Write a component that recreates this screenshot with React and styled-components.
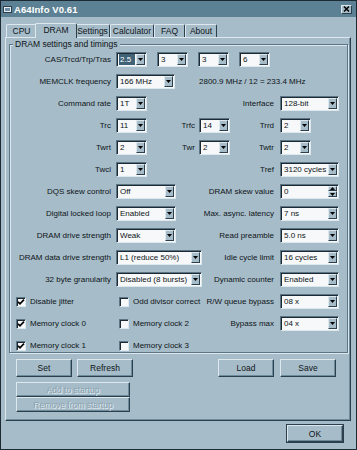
import React from 'react';
import styled, { createGlobalStyle } from 'styled-components';

const C = {
  face: '#a6bcc8',
  title: '#5d8194',
  light: '#dde8ee',
  dark: '#2c3f4c',
  mid: '#6f8c9c',
  edge: '#5b7585',
  deep: '#1d2a33',
  text: '#0e1418',
  field: '#f6f8f9',
  sel: '#3f6277',
};

const Global = createGlobalStyle`
  html, body { margin: 0; padding: 0; background: ${C.face}; }
  body {
    font-family: "Liberation Sans", Arial, sans-serif;
    font-size: 8px;
    color: ${C.text};
  }
  #root { width: 357px; height: 450px; }
`;

const Window = styled.div`
  width: 357px;
  height: 450px;
  box-sizing: border-box;
  background: ${C.face};
  border: 1px solid #1c2a33;
  display: flex;
  flex-direction: column;
`;

const TitleBar = styled.div`
  height: 16px;
  flex: none;
  background: ${C.title};
  display: flex;
  align-items: center;
  gap: 2px;
  padding: 0 4px 0 2px;
  color: #fff;
  font-weight: bold;
  font-size: 9.5px;
`;

const TitleText = styled.span`
  flex: 1;
  letter-spacing: 0.1px;
`;

const CloseBtn = styled.div`
  width: 11px;
  height: 9px;
  box-sizing: border-box;
  background: ${C.face};
  border-top: 1px solid ${C.light};
  border-left: 1px solid ${C.light};
  border-right: 1px solid ${C.dark};
  border-bottom: 1px solid ${C.dark};
  display: flex;
  align-items: center;
  justify-content: center;
`;

const Main = styled.div`
  padding: 0 5px 0 4px;
  display: flex;
  flex-direction: column;
`;

const TabStrip = styled.div`
  display: flex;
  align-items: flex-end;
  height: 15px;
  margin-top: 6px;
  margin-bottom: -1px;
  padding-left: 1px;
  position: relative;
  z-index: 1;
`;

const Tab = styled.div`
  width: ${(p) => p.$w}px;
  height: ${(p) => (p.$active ? 15 : 13)}px;
  margin: 0 ${(p) => (p.$active ? '-2px' : '0')} ${(p) => (p.$active ? 0 : 1)}px;
  box-sizing: border-box;
  background: ${C.face};
  border-top: 1px solid ${C.light};
  border-left: 1px solid ${C.light};
  border-right: 1px solid ${C.dark};
  border-radius: 2px 2px 0 0;
  display: flex;
  align-items: center;
  justify-content: center;
  padding-bottom: ${(p) => (p.$active ? 2 : 0)}px;
  position: relative;
  z-index: ${(p) => (p.$active ? 2 : 1)};
  white-space: nowrap;
  font-size: 8.5px;
`;

const Panel = styled.div`
  height: 384px;
  box-sizing: border-box;
  border-top: 1px solid ${C.light};
  border-left: 1px solid ${C.light};
  border-right: 1px solid ${C.dark};
  border-bottom: 1px solid ${C.dark};
  box-shadow: inset -1px -1px 0 ${C.mid};
  padding: 1px 2px 0 3px;
  display: flex;
  flex-direction: column;
`;

const Group = styled.fieldset`
  margin: 0;
  padding: 2px 0 0 0;
  min-width: 0;
  height: 314px;
  box-sizing: border-box;
  border: 1px solid ${C.edge};
  box-shadow: inset 1px 1px 0 ${C.light}, 1px 1px 0 ${C.light};
`;

const Legend = styled.legend`
  margin-left: 3px;
  padding: 0 2px;
  line-height: 11px;
  font-size: 8.5px;
  background: ${C.face};
`;

const Grid = styled.div`
  display: grid;
  grid-template-columns: 106px 31px 52px 31px 50px 59px;
  grid-auto-rows: 15px;
  row-gap: 7px;
  align-items: center;
`;

const Label = styled.span`
  grid-column: ${(p) => p.$col};
  text-align: right;
  padding-right: ${(p) => p.$pr}px;
  white-space: nowrap;
  line-height: 15px;
`;

const Info = styled.span`
  grid-column: ${(p) => p.$col};
  white-space: nowrap;
  line-height: 15px;
`;

const ComboRow = styled.div`
  grid-column: ${(p) => p.$col};
  display: flex;
  gap: 10px;
`;

const ComboBox = styled.div`
  grid-column: ${(p) => p.$col};
  width: ${(p) => p.$w}px;
  height: 15px;
  box-sizing: border-box;
  display: flex;
  background: ${C.field};
  border-top: 1px solid ${C.edge};
  border-left: 1px solid ${C.edge};
  border-right: 1px solid ${C.light};
  border-bottom: 1px solid ${C.light};
  box-shadow: inset 1px 1px 0 ${C.deep};
  padding: 1px;
`;

const Field = styled.span`
  flex: 1;
  min-width: 0;
  margin: 0 1px 0 1px;
  padding-left: 1px;
  line-height: 11px;
  white-space: nowrap;
  overflow: hidden;
  background: ${(p) => (p.$sel ? C.sel : 'transparent')};
  color: ${(p) => (p.$sel ? '#fff' : C.text)};
`;

const DropBtn = styled.span`
  width: 9px;
  height: 11px;
  flex: none;
  box-sizing: border-box;
  background: ${C.face};
  border-top: 1px solid ${C.light};
  border-left: 1px solid ${C.light};
  border-right: 1px solid ${C.dark};
  border-bottom: 1px solid ${C.dark};
  display: flex;
  align-items: center;
  justify-content: center;
`;

const SpinCol = styled.span`
  width: 9px;
  flex: none;
  display: flex;
  flex-direction: column;
`;

const SpinBtn = styled(DropBtn)`
  height: ${(p) => p.$h}px;
`;

const Check = styled.span`
  grid-column: ${(p) => p.$col};
  justify-self: start;
  margin-left: ${(p) => p.$ml}px;
  display: flex;
  align-items: center;
  gap: 4px;
  white-space: nowrap;
`;

const Box = styled.span`
  width: 10px;
  height: 10px;
  box-sizing: border-box;
  background: ${C.field};
  border-top: 1px solid ${C.edge};
  border-left: 1px solid ${C.edge};
  border-right: 1px solid ${C.light};
  border-bottom: 1px solid ${C.light};
  box-shadow: inset 1px 1px 0 ${C.deep};
  display: flex;
  align-items: center;
  justify-content: center;
`;

const Actions = styled.div`
  display: flex;
  justify-content: space-between;
  align-items: flex-start;
  margin-top: 6px;
  padding: 0 12px 0 7px;
`;

const Col = styled.div`
  display: flex;
  flex-direction: column;
`;

const BtnRow = styled.div`
  display: flex;
  gap: ${(p) => p.$gap}px;
  margin-bottom: ${(p) => p.$mb || 0}px;
`;

const Btn = styled.button`
  width: ${(p) => p.$w}px;
  height: ${(p) => p.$h}px;
  box-sizing: border-box;
  margin: 0;
  padding: 0;
  font: inherit;
  font-size: 8.5px;
  display: flex;
  align-items: center;
  justify-content: center;
  background: ${C.face};
  border-top: 1px solid ${C.light};
  border-left: 1px solid ${C.light};
  border-right: 1px solid ${C.dark};
  border-bottom: 1px solid ${C.dark};
  border-radius: 0;
  box-shadow: inset -1px -1px 0 ${C.mid};
  color: ${(p) => (p.$off ? '#8aa2b0' : C.text)};
  text-shadow: ${(p) => (p.$off ? `1px 1px 0 #e4edf2` : 'none')};
  outline: ${(p) => (p.$def ? `1px solid ${C.dark}` : 'none')};
  outline-offset: 0;
`;

const Footer = styled.div`
  display: flex;
  justify-content: flex-end;
  padding: 4px 8px 0 0;
`;

const Arrow = () => (
  <svg width="5" height="3" viewBox="0 0 5 3">
    <polygon points="0,0 5,0 2.5,3" fill="#000" />
  </svg>
);

const Up = () => (
  <svg width="5" height="3" viewBox="0 0 5 3">
    <polygon points="0,3 5,3 2.5,0" fill="#000" />
  </svg>
);

const Combo = ({ col, w, value, sel }) => (
  <ComboBox $col={col} $w={w}>
    <Field $sel={sel}>{value}</Field>
    <DropBtn>
      <Arrow />
    </DropBtn>
  </ComboBox>
);

const Spin = ({ col, w, value }) => (
  <ComboBox $col={col} $w={w}>
    <Field>{value}</Field>
    <SpinCol>
      <SpinBtn $h={5}>
        <Up />
      </SpinBtn>
      <SpinBtn $h={6}>
        <Arrow />
      </SpinBtn>
    </SpinCol>
  </ComboBox>
);

const CheckBox = ({ col, ml, checked, label }) => (
  <Check $col={col} $ml={ml}>
    <Box>
      {checked && (
        <svg width="8" height="8" viewBox="0 0 8 8">
          <path d="M1 3.8 L3 5.8 L7 1.6" stroke="#000" strokeWidth="1.7" fill="none" />
        </svg>
      )}
    </Box>
    {label}
  </Check>
);

const L1 = ({ children }) => (
  <Label $col="1" $pr={5}>
    {children}
  </Label>
);
const LMid = ({ children }) => (
  <Label $col="3" $pr={4}>
    {children}
  </Label>
);
const LRight = ({ children }) => (
  <Label $col="5" $pr={6}>
    {children}
  </Label>
);
const LWide = ({ children }) => (
  <Label $col="4 / 6" $pr={6}>
    {children}
  </Label>
);

const tabs = [
  ['CPU', 31],
  ['DRAM', 42, true],
  ['Settings', 35],
  ['Calculator', 44],
  ['FAQ', 31],
  ['About', 32],
];

export default function App() {
  return (
    <>
      <Global />
      <Window>
        <TitleBar>
          <svg width="9" height="9" viewBox="0 0 9 9">
            <rect x="0.5" y="1.5" width="8" height="6" fill="#e8eef2" stroke="#2c3f4c" />
            <rect x="2" y="3" width="5" height="3" fill="#6f8fa6" />
          </svg>
          <TitleText>A64Info V0.61</TitleText>
          <CloseBtn>
            <svg width="7" height="6" viewBox="0 0 7 6">
              <path d="M1 0.5 L6 5.5 M6 0.5 L1 5.5" stroke="#000" strokeWidth="1.5" />
            </svg>
          </CloseBtn>
        </TitleBar>
        <Main>
          <TabStrip>
            {tabs.map(([t, w, a]) => (
              <Tab key={t} $w={w} $active={a}>
                {t}
              </Tab>
            ))}
          </TabStrip>
          <Panel>
            <Group>
              <Legend>DRAM settings and timings</Legend>
              <Grid>
                <L1>CAS/Trcd/Trp/Tras</L1>
                <ComboRow $col="2 / 7">
                  <Combo w={31} value="2.5" sel />
                  <Combo w={31} value="3" />
                  <Combo w={31} value="3" />
                  <Combo w={31} value="6" />
                </ComboRow>

                <L1>MEMCLK frequency</L1>
                <Combo col="2 / 4" w={59} value="166 MHz" />
                <Info $col="4 / 7">2800.9 MHz / 12 = 233.4 MHz</Info>

                <L1>Command rate</L1>
                <Combo col="2" w={31} value="1T" />
                <LWide>Interface</LWide>
                <Combo col="6" w={59} value="128-bit" />

                <L1>Trc</L1>
                <Combo col="2" w={31} value="11" />
                <LMid>Trfc</LMid>
                <Combo col="4" w={31} value="14" />
                <LRight>Trrd</LRight>
                <Combo col="6" w={31} value="2" />

                <L1>Twrt</L1>
                <Combo col="2" w={31} value="2" />
                <LMid>Twr</LMid>
                <Combo col="4" w={31} value="2" />
                <LRight>Twtr</LRight>
                <Combo col="6" w={31} value="2" />

                <L1>Twcl</L1>
                <Combo col="2" w={31} value="1" />
                <LWide>Tref</LWide>
                <Combo col="6" w={59} value="3120 cycles" />

                <L1>DQS skew control</L1>
                <Combo col="2 / 4" w={60} value="Off" />
                <LWide>DRAM skew value</LWide>
                <Spin col="6" w={59} value="0" />

                <L1>Digital locked loop</L1>
                <Combo col="2 / 4" w={60} value="Enabled" />
                <LWide>Max. async. latency</LWide>
                <Combo col="6" w={59} value="7 ns" />

                <L1>DRAM drive strength</L1>
                <Combo col="2 / 4" w={60} value="Weak" />
                <LWide>Read preamble</LWide>
                <Combo col="6" w={59} value="5.0 ns" />

                <L1>DRAM data drive strength</L1>
                <Combo col="2 / 4" w={86} value="L1 (reduce 50%)" />
                <LWide>Idle cycle limit</LWide>
                <Combo col="6" w={59} value="16 cycles" />

                <L1>32 byte granularity</L1>
                <Combo col="2 / 4" w={86} value="Disabled (8 bursts)" />
                <LWide>Dynamic counter</LWide>
                <Combo col="6" w={59} value="Enabled" />

                <CheckBox col="1" ml={6} checked label="Disable jitter" />
                <CheckBox col="2 / 4" ml={3} label="Odd divisor correct" />
                <LWide>R/W queue bypass</LWide>
                <Combo col="6" w={59} value="08 x" />

                <CheckBox col="1" ml={6} checked label="Memory clock 0" />
                <CheckBox col="2 / 4" ml={3} label="Memory clock 2" />
                <LWide>Bypass max</LWide>
                <Combo col="6" w={59} value="04 x" />

                <CheckBox col="1" ml={6} checked label="Memory clock 1" />
                <CheckBox col="2 / 4" ml={3} label="Memory clock 3" />
              </Grid>
            </Group>
            <Actions>
              <Col>
                <BtnRow $gap={5} $mb={5}>
                  <Btn $w={56} $h={18}>Set</Btn>
                  <Btn $w={56} $h={18}>Refresh</Btn>
                </BtnRow>
                <Btn $w={114} $h={15} $off>Add to startup</Btn>
                <Btn $w={114} $h={15} $off>Remove from startup</Btn>
              </Col>
              <BtnRow $gap={6}>
                <Btn $w={56} $h={18}>Load</Btn>
                <Btn $w={56} $h={18}>Save</Btn>
              </BtnRow>
            </Actions>
          </Panel>
          <Footer>
            <Btn $w={56} $h={17} $def>OK</Btn>
          </Footer>
        </Main>
      </Window>
    </>
  );
}
